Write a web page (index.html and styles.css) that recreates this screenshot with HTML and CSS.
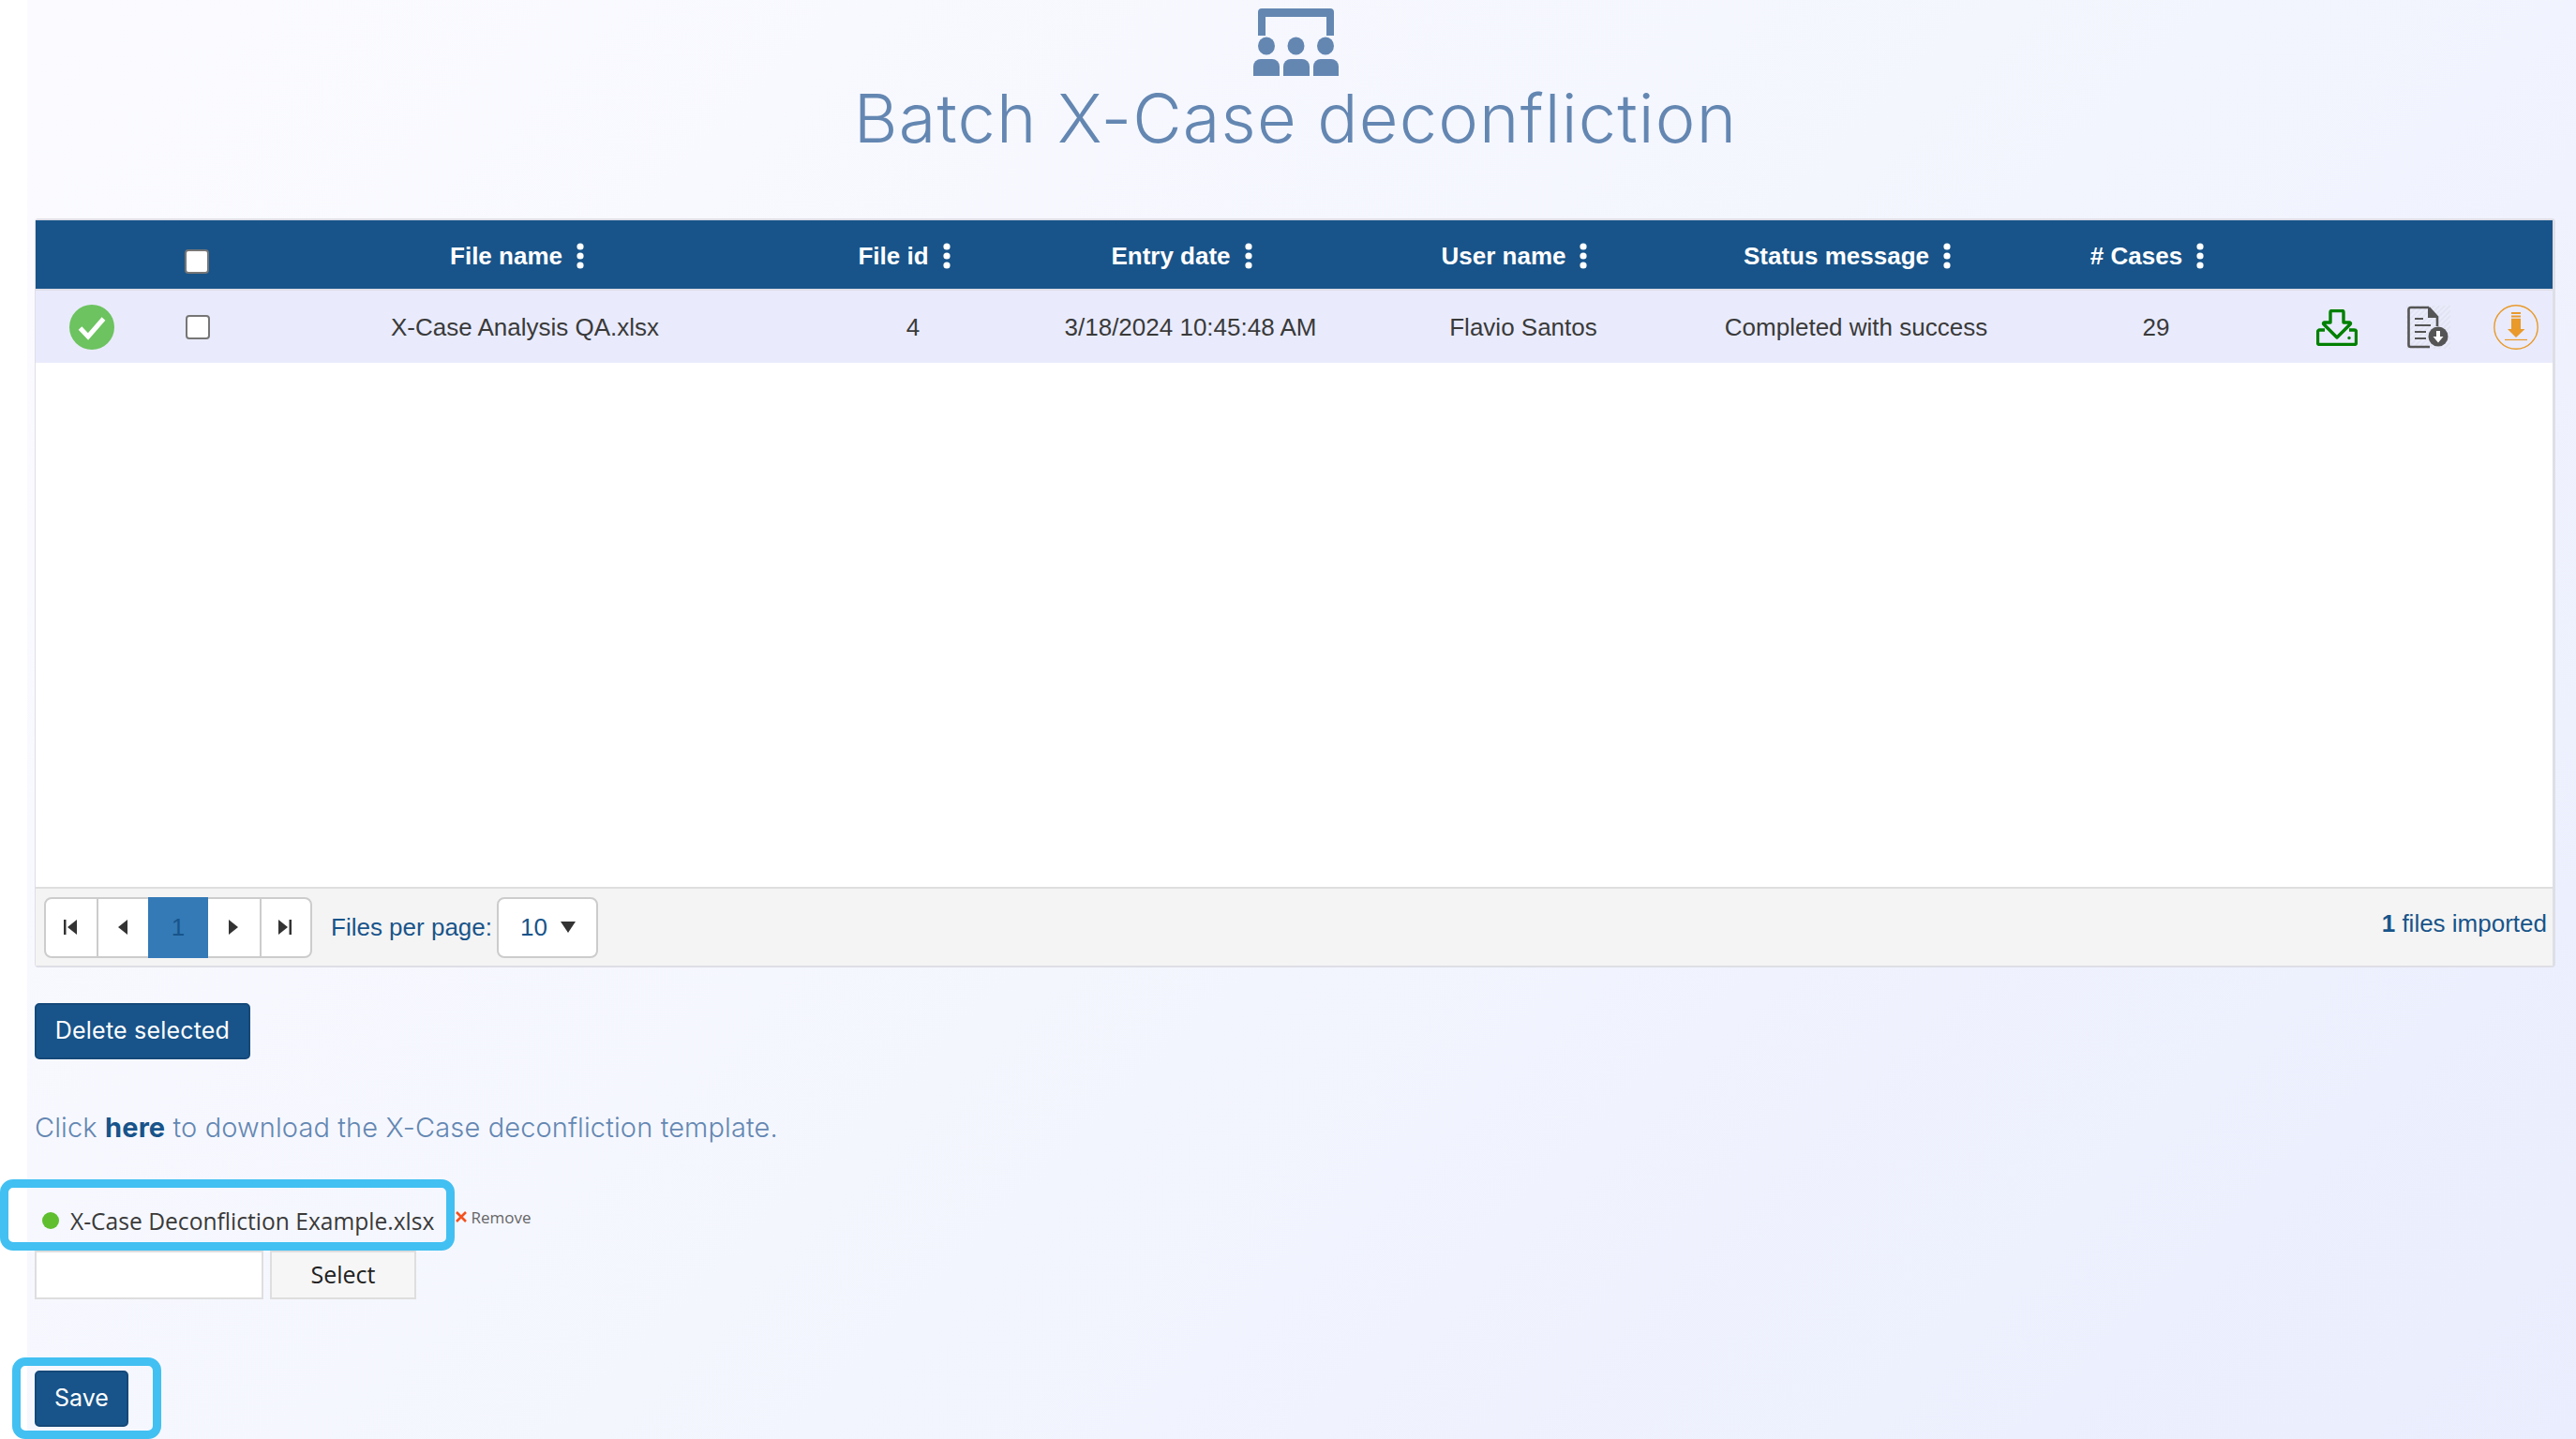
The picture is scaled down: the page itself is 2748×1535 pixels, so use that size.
FILE: index.html
```html
<!DOCTYPE html>
<html lang="en">
<head>
<meta charset="utf-8">
<title>Batch X-Case deconfliction</title>
<link rel="stylesheet" href="styles.css">
</head>
<body>
<div class="page">
  <main class="content">
    <header class="title-block">
      <svg class="title-icon" viewBox="0 0 91 72" aria-hidden="true">
        <path d="M5 29V4a4 4 0 0 1 4-4h73a4 4 0 0 1 4 4v25h-8V9H13v20z"/>
        <ellipse cx="14" cy="40" rx="9" ry="9.5"/><ellipse cx="45.500" cy="40" rx="9" ry="9.500"/><ellipse cx="77" cy="40" rx="9" ry="9.500"/>
        <path d="M0 72V62a8 8 0 0 1 8-8h12a8 8 0 0 1 8 8v10z"/><path d="M32 72V62a8 8 0 0 1 8-8h12a8 8 0 0 1 8 8v10z"/><path d="M64 72V62a8 8 0 0 1 8-8h11a8 8 0 0 1 8 8v10z"/>
      </svg>
      <h1 class="title">Batch X-Case deconfliction</h1>
    </header>

    <section class="grid">
      <div class="row head">
        <div class="cell"></div>
        <div class="cell"><input class="check head-check" type="checkbox"></div>
        <div class="cell hcell"><span>File name</span><svg class="kebab" viewBox="0 0 8 28"><circle cx="4" cy="4" r="3.600"/><circle cx="4" cy="14" r="3.600"/><circle cx="4" cy="24" r="3.600"/></svg></div>
        <div class="cell hcell"><span>File id</span><svg class="kebab" viewBox="0 0 8 28"><circle cx="4" cy="4" r="3.600"/><circle cx="4" cy="14" r="3.600"/><circle cx="4" cy="24" r="3.600"/></svg></div>
        <div class="cell hcell"><span>Entry date</span><svg class="kebab" viewBox="0 0 8 28"><circle cx="4" cy="4" r="3.600"/><circle cx="4" cy="14" r="3.600"/><circle cx="4" cy="24" r="3.600"/></svg></div>
        <div class="cell hcell"><span>User name</span><svg class="kebab" viewBox="0 0 8 28"><circle cx="4" cy="4" r="3.600"/><circle cx="4" cy="14" r="3.600"/><circle cx="4" cy="24" r="3.600"/></svg></div>
        <div class="cell hcell"><span>Status message</span><svg class="kebab" viewBox="0 0 8 28"><circle cx="4" cy="4" r="3.600"/><circle cx="4" cy="14" r="3.600"/><circle cx="4" cy="24" r="3.600"/></svg></div>
        <div class="cell hcell"><span># Cases</span><svg class="kebab" viewBox="0 0 8 28"><circle cx="4" cy="4" r="3.600"/><circle cx="4" cy="14" r="3.600"/><circle cx="4" cy="24" r="3.600"/></svg></div>
        <div class="cell"></div><div class="cell"></div><div class="cell"></div>
      </div>
      <div class="row data">
        <div class="cell">
          <svg class="ico-48" viewBox="0 0 48 48"><circle cx="24" cy="24" r="24" fill="#6cc35f"/><path d="M11.500 25l8.500 9 16.500-19" fill="none" stroke="#fff" stroke-width="5"/></svg>
        </div>
        <div class="cell"><input class="check" type="checkbox"></div>
        <div class="cell name-cell">X-Case Analysis QA.xlsx</div>
        <div class="cell">4</div>
        <div class="cell">3/18/2024 10:45:48 AM</div>
        <div class="cell">Flavio Santos</div>
        <div class="cell">Completed with success</div>
        <div class="cell">29</div>
        <div class="cell">
          <svg class="ico-green" viewBox="0 0 44 39" fill="none" stroke="#008000" stroke-width="3.400" stroke-linejoin="round">
            <path d="M15 14V3a1.500 1.500 0 0 1 1.500-1.500h11A1.500 1.500 0 0 1 29 3v11h6.500a1 1 0 0 1 .7 1.700L22 30 7.800 15.700a1 1 0 0 1 .7-1.700z"/>
            <path d="M9 22H3.500a2 2 0 0 0-2 2v11.500a2 2 0 0 0 2 2h37a2 2 0 0 0 2-2V24a2 2 0 0 0-2-2H35"/>
            <circle cx="35" cy="30.500" r="1.700" fill="#008000" stroke="none"/>
          </svg>
        </div>
        <div class="cell">
          <svg class="ico-doc" viewBox="0 0 47 46">
            <defs><pattern id="hatch" width="4" height="4" patternUnits="userSpaceOnUse" patternTransform="rotate(-45)"><rect width="4" height="4" fill="#eaecfb"/><rect width="4" height="2" fill="#e2e4f3"/></pattern></defs>
            <rect width="47" height="46" fill="url(#hatch)"/>
            <path d="M24 2H4.500a2 2 0 0 0-2 2v38a2 2 0 0 0 2 2H25M24 2l9 10v10" fill="none" stroke="#555" stroke-width="2.600"/>
            <path d="M23 2l10 11H23z" fill="#555"/>
            <path d="M9 14h9M9 21h17M9 28h12M9 35h12" stroke="#555" stroke-width="2.200"/>
            <circle cx="34" cy="33" r="10.500" fill="#555"/>
            <path d="M32 27h4v6h3.500L34 39.500 28.500 33H32z" fill="#fff"/>
          </svg>
        </div>
        <div class="cell last-icon">
          <svg class="ico-48" viewBox="0 0 48 48">
            <circle cx="24" cy="24" r="23.200" fill="none" stroke="#e99a2b" stroke-width="1.400"/>
            <path d="M19 8h10v2H19zM19 11.400h10v2H19zM19 14.800h10V26h4.500L24 35 15 26h4z" fill="#e99a2b"/>
            <path d="M12 37.500h24" stroke="#e99a2b" stroke-width="1.200"/>
          </svg>
        </div>
      </div>
      <div class="grid-body"></div>
      <footer class="pager-bar">
        <nav class="pager">
          <span class="page-btn"><svg class="pg-ico" viewBox="0 0 14 16"><path d="M0 0h2.500v16H0zM14 0v16L4 8z"/></svg></span>
          <span class="page-btn"><svg class="pg-ico" viewBox="0 0 14 16"><path d="M12 0v16L2 8z"/></svg></span>
          <span class="page-btn current">1</span>
          <span class="page-btn"><svg class="pg-ico" viewBox="0 0 14 16"><path d="M2 0v16l10-8z"/></svg></span>
          <span class="page-btn"><svg class="pg-ico" viewBox="0 0 14 16"><path d="M0 0v16l10-8zM11.500 0H14v16h-2.500z"/></svg></span>
        </nav>
        <span class="per-page">Files per page:</span>
        <span class="select-box">10<svg class="caret" viewBox="0 0 16 12"><path d="M0 0h16L8 12z"/></svg></span>
        <span class="count"><b>1</b> files imported</span>
      </footer>
    </section>

    <button class="btn btn-delete" type="button">Delete selected</button>
    <p class="template-link">Click <a href="#">here</a> to download the X-Case deconfliction template.</p>

    <div class="file-row">
      <span class="dot"></span>
      <span class="file-name">X-Case Deconfliction Example.xlsx</span>
      <span class="remove"><svg class="remove-x" viewBox="0 0 12 12"><path d="M1 1l10 10M11 1L1 11" stroke="#f4511e" stroke-width="2.600"/></svg>Remove</span>
    </div>
    <div class="upload">
      <span class="upload-input"></span>
      <span class="upload-btn">Select</span>
    </div>
    <button class="btn btn-save" type="button">Save</button>
  </main>
  <div class="annot annot-file"></div>
  <div class="annot annot-save"></div>
</div>
</body>
</html>
```

FILE: styles.css
```css
* { box-sizing: border-box; }
html, body { margin: 0; padding: 0; height: 100%; overflow: hidden; background: #fff; }
.page { position: relative; width: 2748px; height: 1535px; padding-left: 29px; overflow: hidden; font-family: "Liberation Sans", Arial, sans-serif; color: #333; }
.content { height: 1535px; padding: 9px 22px 0 8px; background: linear-gradient(135deg, #fbfbff 0%, #f4f6fe 50%, #e9edfd 100%); display: flex; flex-direction: column; align-items: flex-start; }

.title-block { align-self: stretch; height: 224px; padding-left: 1px; display: flex; flex-direction: column; align-items: center; }
.title-icon { width: 91px; height: 72px; fill: #6487b2; flex: none; }
.title { margin: 0; font-family: Inter, "Open Sans", sans-serif; font-weight: 300; font-size: 72px; letter-spacing: 1.2px; line-height: 90px; color: #6487b2; white-space: nowrap; }

.grid { width: 2689px; flex: none; height: 799px; display: flex; flex-direction: column; border: 3px solid #dedee6; border-width: 2px 3px 2px 1px; border-radius: 4px; background: #fff; }
.row { display: grid; grid-template-columns: 120px 106px 594px 232px 360px 350px 360px 280px 106px 89px 88px; flex: none; }
.cell { display: flex; align-items: center; justify-content: center; font-size: 26px; white-space: nowrap; }
.head { height: 75px; background: #18548a; color: #fff; border-bottom: 2px solid #dddde6; }
.hcell { font-weight: 700; gap: 15px; padding: 3px 19px 0 0; }
.kebab { width: 8px; height: 28px; fill: #fff; flex: none; }
.check { appearance: none; -webkit-appearance: none; width: 26px; height: 26px; margin: 0; flex: none; background: #fff; border: 2px solid #767676; border-radius: 4px; }
.head-check { position: relative; top: 7px; left: -1px; }
.data { height: 77px; background: #e9ebfc; }
.data .cell { color: #3a3a3a; padding-top: 1px; }
.data .name-cell { padding-right: 2px; }
.data .last-icon { padding-left: 10px; }
.ico-48 { width: 48px; height: 48px; }
.ico-green { width: 44px; height: 39px; }
.ico-doc { width: 47px; height: 46px; }
.grid-body { flex: 1; background: #fff; border-bottom: 2px solid #dedede; }

.pager-bar { height: 82px; flex: none; background: #f4f4f4; display: flex; align-items: center; padding: 0 6px 0 9px; color: #18548a; font-size: 26px; }
.pager { display: flex; height: 65px; background: #fff; border: 2px solid #ccc; border-radius: 8px; flex: none; }
.page-btn { width: 55px; padding-right: 2px; display: flex; align-items: center; justify-content: center; border-left: 2px solid #ccc; }
.page-btn:first-child { border-left: 0; width: 54px; }
.page-btn:last-child { width: 54px; }
.page-btn.current { width: 64px; padding-right: 0; margin: -2px 0; border: 0; background: #337ab7; color: #18548a; }
.page-btn.current + .page-btn { border-left: 0; }
.pg-ico { width: 14px; height: 16px; fill: #333; }
.per-page { margin-left: 20px; }
.select-box { margin-left: 5px; width: 108px; height: 65px; padding-left: 1px; background: #fff; border: 2px solid #ccc; border-radius: 8px; display: flex; align-items: center; justify-content: center; gap: 14px; }
.caret { width: 16px; height: 12px; fill: #333; }
.count { margin-left: auto; padding-bottom: 7px; }

.btn { display: block; border-radius: 5px; border: 2px solid #15497a; background: #18548a; color: #fff; font-family: Inter, "Open Sans", sans-serif; font-weight: 400; font-size: 25px; padding: 0 0 2px; flex: none; }
.btn-delete { width: 230px; height: 60px; margin-top: 38px; letter-spacing: .2px; }
.template-link { margin: 54px 0 0; font-family: Inter, "Open Sans", sans-serif; font-weight: 300; font-size: 29px; letter-spacing: .12px; line-height: 38px; color: #6487b2; }
.template-link a { color: #18548a; font-weight: 700; text-decoration: none; }

.file-row { display: flex; align-items: center; height: 40px; margin-top: 60px; padding-left: 8px; flex: none; }
.dot { width: 18px; height: 18px; border-radius: 50%; background: #5fbf2f; flex: none; }
.file-name { margin-left: 12px; font-family: "Open Sans", sans-serif; font-size: 24.6px; color: #3a3a3a; white-space: nowrap; }
.remove { margin-left: 23px; margin-top: -8px; display: flex; align-items: center; gap: 4px; font-family: "Open Sans", sans-serif; font-size: 17px; color: #666; }
.remove-x { width: 12px; height: 12px; }

.upload { display: flex; gap: 7px; height: 52px; margin-top: 12px; flex: none; }
.upload-input { width: 244px; background: #fff; border: 2px solid #dedede; }
.upload-btn { width: 156px; padding-bottom: 3px; background: #f6f6f6; border: 2px solid #dedede; display: flex; align-items: center; justify-content: center; font-family: "Open Sans", sans-serif; font-size: 25px; color: #222; }
.btn-save { width: 100px; height: 60px; margin-top: 76px; }

.annot { position: absolute; border: 9px solid #42c0f2; border-radius: 14px; }
.annot-file { left: 0; top: 1258px; width: 485px; height: 76px; }
.annot-save { left: 13px; top: 1448px; width: 159px; height: 87px; }
```
